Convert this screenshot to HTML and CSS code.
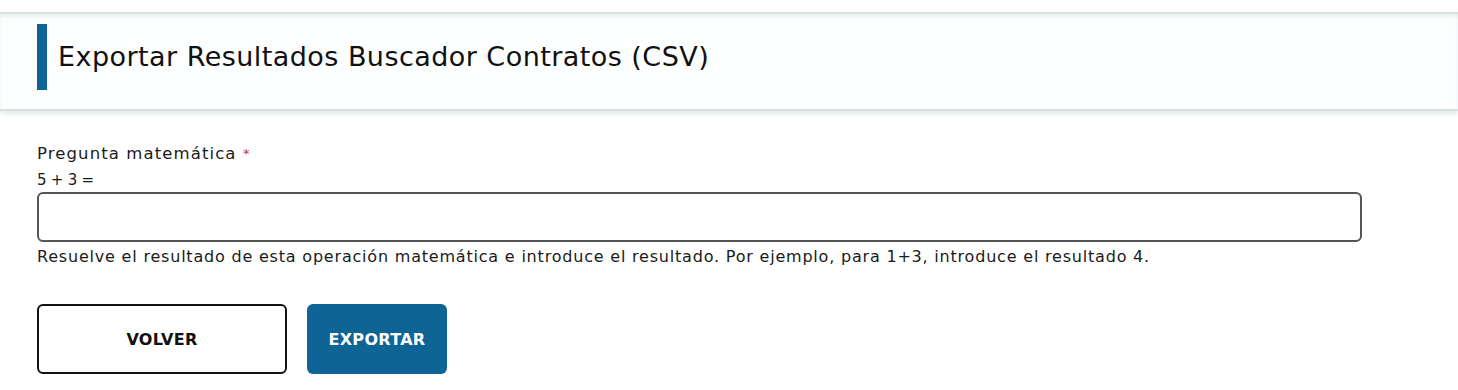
FILE: index.html
```html
<!DOCTYPE html>
<html lang="es">
<head>
<meta charset="utf-8">
<link rel="stylesheet" href="styles.css">
</head>
<body>
<header class="page-header">
  <h1 class="title">Exportar Resultados Buscador Contratos (CSV)</h1>
</header>
<form class="form">
  <div class="field">
    <label class="label" for="captcha">Pregunta matemática <span class="req">*</span></label>
    <div class="question">5 + 3 =</div>
    <input class="input" id="captcha" type="text">
    <div class="help">Resuelve el resultado de esta operación matemática e introduce el resultado. Por ejemplo, para 1+3, introduce el resultado 4.</div>
  </div>
  <div class="actions">
    <button type="button" class="btn btn-outline">VOLVER</button>
    <button type="button" class="btn btn-primary">EXPORTAR</button>
  </div>
</form>
</body>
</html>
```
FILE: styles.css
```css
* { box-sizing: border-box; }
body {
  margin: 0;
  background: #fff;
  font-family: "DejaVu Sans", "Noto Sans", sans-serif;
  color: #1a1a1a;
}
.page-header {
  margin-top: 12px;
  border-top: 2px solid #d9e0e2;
  border-bottom: 2px solid #d9e0e2;
  box-shadow: 0 3px 4px rgba(180,195,200,0.35), inset 0 3px 3px rgba(180,195,200,0.25);
  background: #fdfefe;
  padding: 10px 0 19px 37px;
}
.title {
  margin: 0;
  font-weight: 400;
  font-size: 27px;
  letter-spacing: 0.45px;
  line-height: 66px;
  border-left: 10px solid #0f6496;
  padding-left: 11px;
  color: #111;
}
.form {
  padding: 32px 96px 0 37px;
}
.label {
  display: block;
  font-size: 16.5px;
  letter-spacing: 1.1px;
  line-height: 22px;
}
.req { color: #c0392b; font-size: 13px; vertical-align: top; letter-spacing: 0; }
.question {
  font-size: 15px;
  word-spacing: -0.5px;
  line-height: 18px;
  margin-top: 6px;
}
.input {
  display: block;
  width: 100%;
  height: 50px;
  margin-top: 3px;
  border: 2px solid #555;
  border-radius: 6px;
  background: #fff;
}
.help {
  font-size: 16px;
  letter-spacing: 0.8px;
  line-height: 20px;
  margin-top: 5px;
}
.actions {
  display: flex;
  gap: 20px;
  margin-top: 37px;
}
.btn {
  height: 70px;
  border-radius: 6px;
  font-family: inherit;
  font-size: 16px;
  font-weight: 600;
  letter-spacing: 0.3px;
  cursor: pointer;
}
.btn-outline {
  width: 250px;
  background: #fff;
  border: 2px solid #111;
  color: #111;
}
.btn-primary {
  width: 140px;
  background: #0f6496;
  border: none;
  color: #fff;
}
```
